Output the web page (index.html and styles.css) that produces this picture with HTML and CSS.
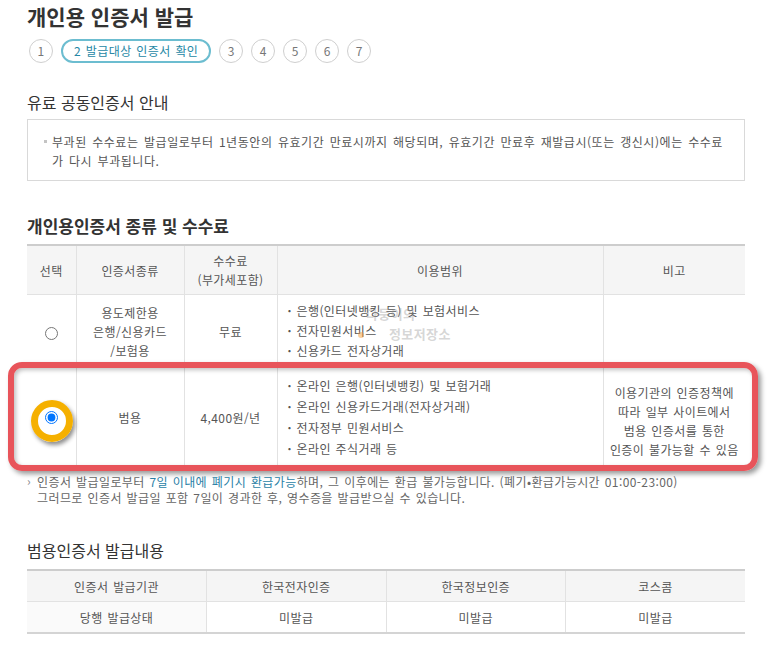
FILE: index.html
```html
<!DOCTYPE html>
<html lang="ko">
<head>
    <meta charset="UTF-8">
    <meta name="viewport" content="width=device-width, initial-scale=1.0">
    <title>개인용 인증서 발급</title>
    <link rel="stylesheet" href="styles.css">
</head>
<body>
<div class="page">
    <h1 class="page-title">개인용 인증서 발급</h1>

    <ol class="steps">
        <li>1</li>
        <li class="on">2 발급대상 인증서 확인</li>
        <li>3</li>
        <li>4</li>
        <li>5</li>
        <li>6</li>
        <li>7</li>
    </ol>

    <h2 class="sec-title">유료 공동인증서 안내</h2>
    <div class="info-box">
        <p>부과된 수수료는 발급일로부터 1년동안의 유효기간 만료시까지 해당되며, 유효기간 만료후 재발급시(또는 갱신시)에는 수수료가 다시 부과됩니다.</p>
    </div>

    <h2 class="sec-title strong">개인용인증서 종류 및 수수료</h2>
    <div class="cert-wrap">
        <table class="cert-table">
            <colgroup>
                <col style="width: 49px">
                <col style="width: 108px">
                <col style="width: 93px">
                <col style="width: 326px">
                <col style="width: 142px">
            </colgroup>
            <thead>
                <tr>
                    <th>선택</th>
                    <th>인증서종류</th>
                    <th>수수료<br>(부가세포함)</th>
                    <th>이용범위</th>
                    <th>비고</th>
                </tr>
            </thead>
            <tbody>
                <tr class="row-limited">
                    <td><input type="radio" name="cert" class="radio"></td>
                    <td class="multi">용도제한용<br>은행/신용카드<br>/보험용</td>
                    <td>무료</td>
                    <td class="scope">
                        <ul>
                            <li>은행(인터넷뱅킹 등) 및 보험서비스</li>
                            <li>전자민원서비스</li>
                            <li>신용카드 전자상거래</li>
                        </ul>
                    </td>
                    <td></td>
                </tr>
                <tr class="row-general">
                    <td>
                        <span class="radio-mark"><input type="radio" name="cert" class="radio" checked></span>
                    </td>
                    <td>범용</td>
                    <td>4,400원/년</td>
                    <td class="scope">
                        <ul>
                            <li>온라인 은행(인터넷뱅킹) 및 보험거래</li>
                            <li>온라인 신용카드거래(전자상거래)</li>
                            <li>전자정부 민원서비스</li>
                            <li>온라인 주식거래 등</li>
                        </ul>
                    </td>
                    <td class="remark">이용기관의 인증정책에<br>따라 일부 사이트에서<br>범용 인증서를 통한<br>인증이 불가능할 수 있음</td>
                </tr>
            </tbody>
        </table>
        <div class="watermark">
            <span class="wm-top">다둥이의</span>
            <span class="wm-bottom"><i class="wm-dot"></i>정보저장소</span>
        </div>
        <div class="highlight-box"></div>
    </div>

    <ul class="notes">
        <li>인증서 발급일로부터 <em>7일 이내에 폐기시 환급가능</em>하며, 그 이후에는 환급 불가능합니다. (폐기•환급가능시간 01:00-23:00)<br>그러므로 인증서 발급일 포함 7일이 경과한 후, 영수증을 발급받으실 수 있습니다.</li>
    </ul>

    <h2 class="sec-title last">범용인증서 발급내용</h2>
    <table class="issue-table">
        <thead>
            <tr>
                <th>인증서 발급기관</th>
                <th>한국전자인증</th>
                <th>한국정보인증</th>
                <th>코스콤</th>
            </tr>
        </thead>
        <tbody>
            <tr>
                <td class="label">당행 발급상태</td>
                <td>미발급</td>
                <td>미발급</td>
                <td>미발급</td>
            </tr>
        </tbody>
    </table>
</div>
</body>
</html>
```

FILE: styles.css
```css
body {
    margin: 0;
    padding: 0;
    background-color: #fff;
    font-family: "Noto Sans CJK KR", "Noto Sans", sans-serif;
    color: #555;
    letter-spacing: 0.4px;
    word-spacing: 1px;
}

.page {
    width: 718px;
    margin-left: 27px;
}

.page-title {
    margin: 0;
    padding-top: 3px;
    font-size: 21px;
    line-height: 26px;
    font-weight: bold;
    color: #333;
    letter-spacing: 0;
    word-spacing: 0;
}

/* steps */
.steps {
    list-style: none;
    margin: 10px 0 0 2px;
    padding: 0;
    display: flex;
    gap: 8px;
}

.steps li {
    min-width: 24px;
    height: 24px;
    box-sizing: border-box;
    border: 1px solid #cfcfcf;
    border-radius: 12px;
    font-size: 12px;
    line-height: 22px;
    text-align: center;
    color: #777;
}

.steps li.on {
    border: 2px solid #6cbdd0;
    padding: 0 11px;
    line-height: 20px;
    color: #2688a5;
}

.sec-title {
    margin: 28px 0 6px;
    font-size: 16px;
    line-height: 22px;
    font-weight: normal;
    color: #333;
    letter-spacing: 0;
    word-spacing: 0;
}

.sec-title.strong {
    margin: 34px 0 7px;
    font-size: 17px;
    font-weight: bold;
}

.sec-title.last {
    margin: 33px 0 8px;
}

.info-box {
    border: 1px solid #d9d9d9;
    padding: 12px 14px 10px 24px;
}

.info-box p {
    position: relative;
    margin: 0;
    font-size: 12px;
    line-height: 19px;
    color: #555;
    letter-spacing: 0.55px;
    word-spacing: 1.5px;
}

.info-box p::before {
    content: "";
    position: absolute;
    left: -8px;
    top: 8px;
    width: 3px;
    height: 3px;
    background-color: #c4c4c4;
}

/* certificate table */
.cert-wrap {
    position: relative;
}

.cert-table {
    width: 718px;
    table-layout: fixed;
    border-collapse: collapse;
    border-top: 2px solid #cdcdcd;
    border-bottom: 1px solid #d4d4d4;
    font-size: 12px;
}

.cert-table th {
    height: 48px;
    padding: 0;
    background-color: #f5f5f5;
    border-left: 1px solid #e2e2e2;
    border-bottom: 1px solid #e2e2e2;
    font-weight: normal;
    line-height: 19px;
    color: #555;
}

.cert-table td {
    padding: 0;
    border-left: 1px solid #e2e2e2;
    border-bottom: 1px solid #e2e2e2;
    text-align: center;
    vertical-align: middle;
    line-height: 19px;
    color: #555;
}

.cert-table th:first-child,
.cert-table td:first-child {
    border-left: none;
}

.row-limited td {
    height: 72px;
}

.row-general td {
    height: 90px;
}

.radio {
    margin: 0;
    width: 13px;
    height: 13px;
    vertical-align: middle;
}

.radio-mark {
    position: relative;
    display: block;
    width: 13px;
    height: 13px;
    margin: 0 auto;
}

.radio-mark .radio {
    display: block;
}

.radio-mark::after {
    content: "";
    position: absolute;
    left: -14px;
    top: -11px;
    width: 28px;
    height: 28px;
    border: 7px solid #f5b000;
    border-radius: 50%;
    box-shadow: 2px 3px 4px rgba(0, 0, 0, 0.45);
}

.cert-table td.scope {
    text-align: left;
    padding-left: 10px;
}

.scope ul {
    list-style: none;
    margin: 0;
    padding: 0;
}

.scope li {
    position: relative;
    padding-left: 9px;
    line-height: 20px;
}

.row-general .scope li {
    line-height: 21px;
}

.scope li::before {
    content: "·";
    position: absolute;
    left: 0;
    top: 0;
    font-weight: bold;
}

.cert-table td.remark {
    padding-top: 8px;
}

.watermark {
    position: absolute;
    left: 326px;
    top: 60px;
    font-size: 13px;
    font-weight: bold;
    line-height: 20px;
    color: rgba(150, 150, 150, 0.4);
    pointer-events: none;
}

.watermark span {
    display: block;
}

.wm-top {
    margin-left: 13px;
}

.wm-bottom {
    margin-left: 5px;
}

.wm-dot {
    display: inline-block;
    width: 6px;
    height: 6px;
    margin-right: 25px;
    border-radius: 50%;
    background-color: rgba(245, 160, 60, 0.5);
    vertical-align: middle;
}

.highlight-box {
    position: absolute;
    left: -19px;
    top: 118px;
    width: 738px;
    height: 97px;
    border: 6px solid #e8545a;
    border-radius: 14px;
    box-shadow: 3px 3px 5px rgba(0, 0, 0, 0.4), inset 2px 2px 4px rgba(0, 0, 0, 0.25);
    pointer-events: none;
}

/* notes */
.notes {
    list-style: none;
    margin: 7px 0 0;
    padding: 0;
}

.notes li {
    position: relative;
    padding-left: 10px;
    font-size: 12px;
    line-height: 16px;
    color: #666;
}

.notes li::before {
    content: "›";
    position: absolute;
    left: 0;
    top: -1px;
    color: #888;
}

.notes em {
    font-style: normal;
    color: #2a7fa6;
}

/* issue table */
.issue-table {
    width: 718px;
    table-layout: fixed;
    border-collapse: collapse;
    border-top: 2px solid #cdcdcd;
    border-bottom: 2px solid #d4d4d4;
    font-size: 12px;
}

.issue-table th,
.issue-table td {
    height: 30px;
    padding: 0;
    border-left: 1px solid #e2e2e2;
    text-align: center;
    font-weight: normal;
    color: #555;
}

.issue-table th {
    background-color: #f5f5f5;
    border-bottom: 1px solid #e2e2e2;
}

.issue-table th:first-child,
.issue-table td:first-child {
    border-left: none;
}

.issue-table td.label {
    background-color: #fafafa;
}
```
